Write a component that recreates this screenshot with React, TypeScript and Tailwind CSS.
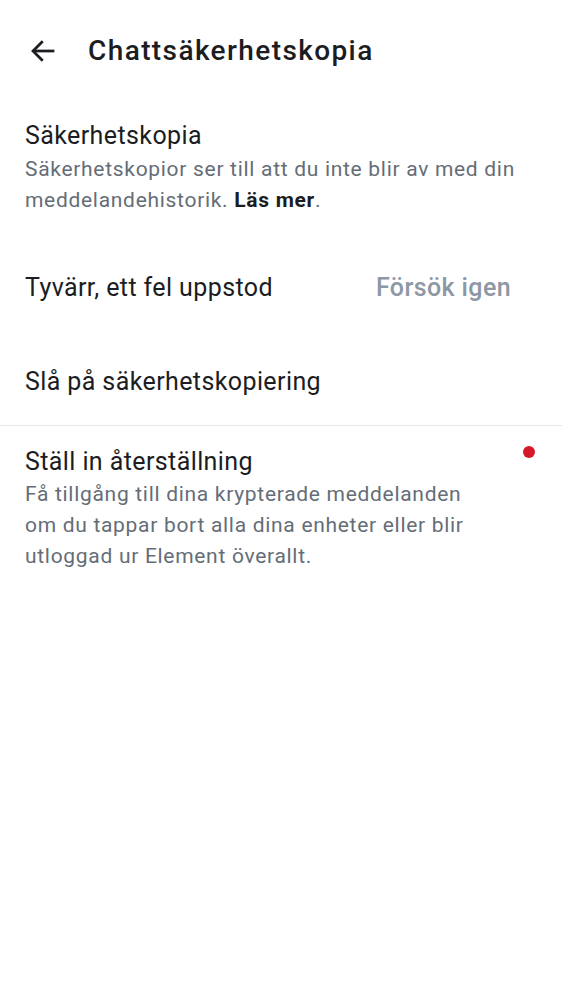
import React from "react";

export default function App() {
  return (
    <div className="w-[562px] min-h-[1000px] bg-white" style={{ fontFamily: "Roboto, sans-serif" }}>
      <div className="flex items-center h-[100px] pl-[28px] pt-[2px]">
        <svg width="30" height="30" viewBox="0 0 24 24" fill="none" stroke="#1b1d22" strokeWidth="2.2" strokeLinecap="square">
          <path d="M20 12H5" />
          <path d="M11 5l-7 7 7 7" />
        </svg>
        <div className="ml-[30px] text-[28px] font-medium tracking-[1.4px] text-[#1b1d22]">Chattsäkerhetskopia</div>
      </div>
      <div className="px-[25px] pt-[19px] pb-[25px]">
        <div className="text-[25px] leading-[34px] tracking-[0.4px] text-[#1b1d22]">Säkerhetskopia</div>
        <div className="text-[21px] leading-[31px] tracking-[0.7px] text-[#656d77] pt-[1px]">
          Säkerhetskopior ser till att du inte blir av med din meddelandehistorik.{" "}
          <span className="font-bold text-[#1b1d22]">Läs mer</span>.
        </div>
      </div>
      <div className="flex items-center justify-between h-[94px] pl-[25px] pr-[51px]">
        <div className="text-[25px] leading-[30px] tracking-[0.4px] text-[#1b1d22]">Tyvärr, ett fel uppstod</div>
        <div className="text-[25px] leading-[30px] font-medium tracking-[0.4px] text-[#8d97a5]">Försök igen</div>
      </div>
      <div className="px-[25px] pt-[32px] pb-[28px] border-b border-[#e5e8ec]">
        <div className="text-[25px] leading-[30px] tracking-[0.4px] text-[#1b1d22]">Slå på säkerhetskopiering</div>
      </div>
      <div className="relative pl-[25px] pr-[80px] pt-[19px] pb-[20px]">
        <div className="text-[25px] leading-[34px] tracking-[0.4px] text-[#1b1d22]">Ställ in återställning</div>
        <div className="text-[21px] leading-[31px] tracking-[0.7px] text-[#656d77]">
          Få tillgång till dina krypterade meddelanden om du tappar bort alla dina enheter eller blir utloggad ur Element överallt.
        </div>
        <div className="absolute right-[27px] top-[20px] w-[12px] h-[12px] rounded-full bg-[#d51928]" />
      </div>
    </div>
  );
}
